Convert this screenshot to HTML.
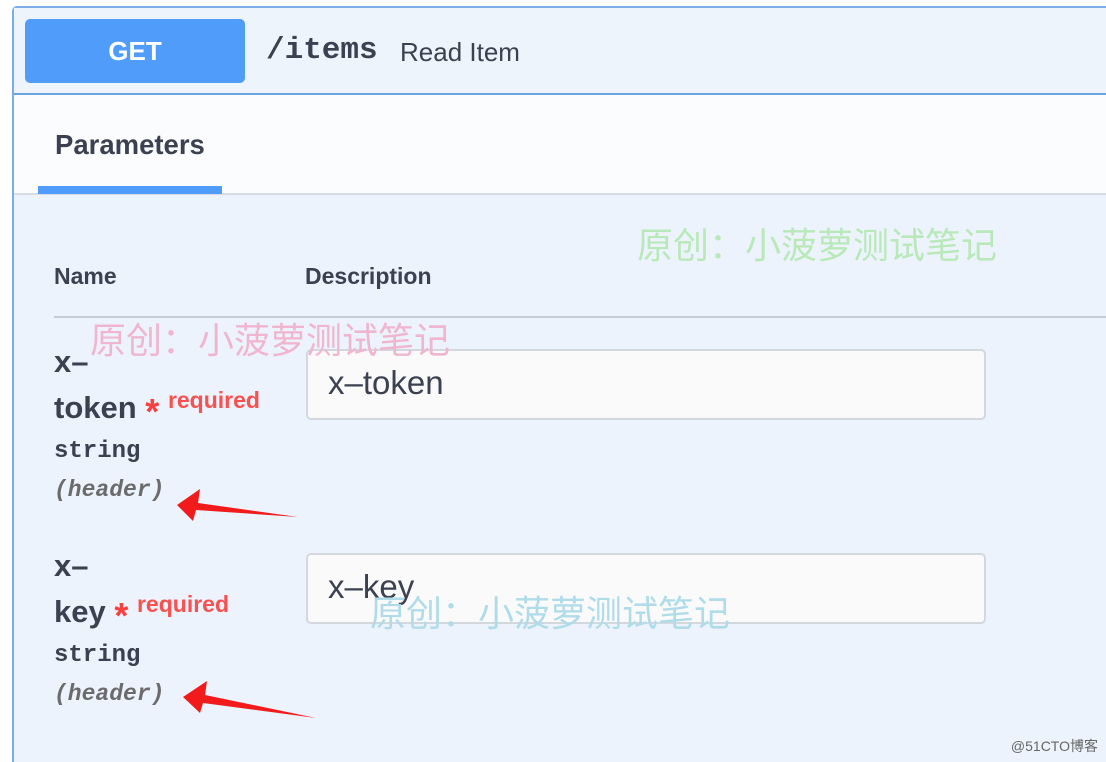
<!DOCTYPE html>
<html><head><meta charset="utf-8"><style>
*{margin:0;padding:0;box-sizing:border-box}
html,body{width:1106px;height:762px;overflow:hidden}
body{background:#fff;font-family:"Liberation Sans",sans-serif;position:relative;color:#3b4151}
.frame{position:absolute;left:12px;top:6px;width:1110px;height:770px;border:2px solid #7cade6;border-radius:5px;background:#ecf3fc}
.hdr{position:absolute;left:0;top:0;right:0;height:87px;background:#eef4fb;border-bottom:2px solid #6aa1df}
.get{position:absolute;left:11px;top:11px;width:220px;height:64px;background:#4f9cfb;border-radius:5px;color:#fff;font-weight:bold;font-size:26px;text-align:center;line-height:64px}
.path{position:absolute;left:252px;top:25px;font-family:"Liberation Mono",monospace;font-weight:bold;font-size:31px;color:#3b4151}
.sum{position:absolute;left:386px;top:29px;font-size:26px;color:#3b4151}
.tabs{position:absolute;left:0;top:87px;right:0;height:100px;background:#fbfcfe;border-bottom:2px solid #d6dde6}
.tab{position:absolute;left:41px;top:34px;font-size:27.5px;font-weight:bold;color:#3b4151}
.ul{position:absolute;left:24px;top:91px;width:184px;height:8px;background:#4f9cfb}
.abs{position:absolute}
.th{font-size:23px;font-weight:bold;color:#3b4151}
.name{font-size:31px;font-weight:bold;color:#3b4151;line-height:44px}
.req{color:#f95050;font-size:23px;font-weight:bold}
.ast{color:#f93e3e;font-size:36px;position:relative;top:6px}
.type{font-family:"Liberation Mono",monospace;font-weight:bold;font-size:24px;color:#3b4151}
.loc{font-family:"Liberation Mono",monospace;font-weight:bold;font-style:italic;font-size:23px;color:#6b6b6b}
.inp{position:absolute;left:306px;width:680px;height:71px;border:2px solid #d3d8de;border-radius:5px;background:#fafafa;font-size:33px;color:#3b4151;padding:13px 20px}
.wm{position:absolute;font-family:"Liberation Sans","Noto Sans CJK SC",sans-serif;font-size:36px;white-space:nowrap}
</style></head><body>
<div class="frame">
 <div class="hdr"><div class="get">GET</div><div class="path">/items</div><div class="sum">Read Item</div></div>
 <div class="tabs"><div class="tab">Parameters</div><div class="ul"></div></div>
</div>
<div class="abs th" style="left:54px;top:263px">Name</div>
<div class="abs th" style="left:305px;top:263px">Description</div>
<div class="abs" style="left:54px;top:316px;width:1060px;height:2px;background:#c5ccd5"></div>
<div class="abs name" style="left:54px;top:340px">x–</div>
<div class="abs name" style="left:54px;top:384px">token <span class="ast">*</span> <span class="req" style="position:relative;top:-10px">required</span></div>
<div class="abs type" style="left:54px;top:438px">string</div>
<div class="abs loc" style="left:54px;top:477px">(header)</div>
<div class="inp" style="top:349px">x–token</div>
<div class="abs name" style="left:54px;top:544px">x–</div>
<div class="abs name" style="left:54px;top:588px">key <span class="ast">*</span> <span class="req" style="position:relative;top:-10px">required</span></div>
<div class="abs type" style="left:54px;top:642px">string</div>
<div class="abs loc" style="left:54px;top:681px">(header)</div>
<div class="inp" style="top:553px">x–key</div>
<div class="wm" style="left:637px;top:217px;color:#b9e9b9">原创：小菠萝测试笔记</div>
<div class="wm" style="left:90px;top:312px;color:#f0b6cf">原创：小菠萝测试笔记</div>
<div class="wm" style="left:370px;top:585px;color:#b0dcea">原创：小菠萝测试笔记</div>
<svg class="abs" style="left:0;top:0" width="1106" height="762">
<polygon points="177,505 200,489 198,503 298,517 196,510 193,521" fill="#f21b1b"/>
<polygon points="183,697 207,681 205,695 316,718 203,703 200,713" fill="#f21b1b"/>
</svg>
<div class="abs" style="right:8px;top:736px;font-size:14px;color:#666;font-family:'Liberation Sans','Noto Sans CJK SC',sans-serif">@51CTO博客</div>
</body></html>
